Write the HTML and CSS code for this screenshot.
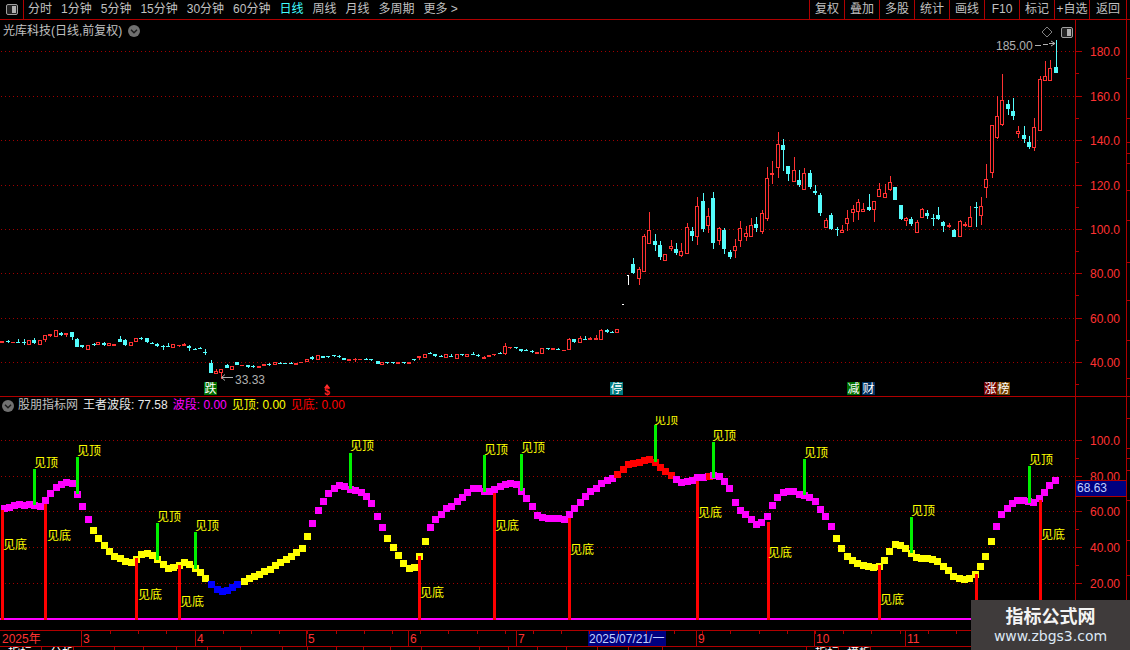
FILE: index.html
```html
<!DOCTYPE html>
<html lang="zh">
<head>
<meta charset="utf-8">
<title>光库科技 日线</title>
<link rel="stylesheet" href="styles.css">
</head>
<body>
<div class="app">
  <header class="toolbar">
    <div class="sidebox">
      <svg class="panel-icon" viewBox="0 0 12 11"><rect x="0.5" y="0.5" width="11" height="10" rx="1.5" class="pi-frame"/><rect x="6" y="2" width="4" height="7" class="pi-fill"/></svg>
    </div>
    <nav class="periods">
      <span>分时</span><span>1分钟</span><span>5分钟</span><span>15分钟</span><span>30分钟</span><span>60分钟</span><span class="active">日线</span><span>周线</span><span>月线</span><span>多周期</span><span>更多 &gt;</span>
    </nav>
    <nav class="actions">
      <span>复权</span><span>叠加</span><span>多股</span><span>统计</span><span>画线</span><span>F10</span><span>标记</span><span>+自选</span><span>返回</span>
    </nav>
  </header>

  <section class="panel price-panel">
    <svg id="price" class="plot price-plot" viewBox="0 20 1130 376"></svg>
    <div class="panel-title">
      <span>光库科技(日线,前复权)</span>
      <svg class="chev" viewBox="0 0 12 12"><circle cx="6" cy="6" r="6" class="chev-bg"/><path d="M3 4.8 6 7.8 9 4.8" class="chev-line"/></svg>
    </div>
    <div class="panel-tools">
      <svg class="diamond" viewBox="0 0 12 12"><path d="M6 1 11 6 6 11 1 6Z"/></svg>
      <svg class="panel-icon" viewBox="0 0 12 11"><rect x="0.5" y="0.5" width="11" height="10" rx="1.5" class="pi-frame"/><rect x="6" y="2" width="4" height="7" class="pi-fill"/></svg>
    </div>
  </section>

  <section class="panel osc-panel">
    <svg id="osc" class="plot osc-plot" viewBox="0 397 1130 233"></svg>
    <div class="osc-title">
      <svg class="chev" viewBox="0 0 12 12"><circle cx="6" cy="6" r="6" class="chev-bg"/><path d="M3 4.8 6 7.8 9 4.8" class="chev-line"/></svg>
      <span class="t-gray">股朋指标网</span>
      <span class="t-white">王者波段: 77.58</span>
      <span class="t-mag">波段: 0.00</span>
      <span class="t-yel">见顶: 0.00</span>
      <span class="t-red">见底: 0.00</span>
    </div>
    <div class="last-value">68.63</div>
  </section>

  <svg id="dates" class="dates" viewBox="0 630 1130 17"></svg>
  <div id="tabs" class="tabs"></div>

  <aside class="watermark">
    <div class="wm-cn">指标公式网</div>
    <div class="wm-url">www.zbgs3.com</div>
  </aside>
</div>
<script src="script.js"></script>
</body>
</html>
```

FILE: styles.css
```css
* { box-sizing: border-box; }
html, body { margin: 0; padding: 0; background: #000; }
body {
  font-family: "Liberation Sans", "Noto Sans CJK SC", sans-serif;
  font-size: 12px;
  color: #c0c0c0;
}
.app {
  position: relative;
  width: 1130px;
  height: 650px;
  overflow: hidden;
  display: flex;
  flex-direction: column;
  background: #000;
}

/* toolbar */
.toolbar {
  display: flex;
  height: 20px;
  border-bottom: 1px solid #b00000;
  flex: none;
}
.sidebox {
  width: 24px;
  border-right: 1px solid #b00000;
  display: flex;
  align-items: center;
  justify-content: center;
}
.panel-icon { width: 12px; height: 11px; display: block; }
.pi-frame { fill: #222; stroke: #a0a0a0; }
.pi-fill { fill: #b0b0b0; }
.periods {
  display: flex;
  gap: 9px;
  padding-left: 4px;
  line-height: 19px;
  white-space: nowrap;
}
.periods .active { color: #40ffff; }
.actions {
  display: flex;
  margin-left: auto;
  margin-right: 3px;
  line-height: 19px;
  border-right: 1px solid #b00000;
}
.actions span {
  width: 35px;
  text-align: center;
  border-left: 1px solid #b00000;
  white-space: nowrap;
}
.actions span:last-child { width: 37px; }

/* panels */
.panel { position: relative; flex: none; }
.plot { display: block; width: 1130px; }
.price-panel { height: 377px; border-bottom: 1px solid #b00000; }
.price-plot { height: 376px; }
.osc-panel { height: 233px; }
.osc-plot { height: 233px; }
.plot text { font-family: "Liberation Sans", "Noto Sans CJK SC", sans-serif; font-size: 12px; }

.panel-title {
  position: absolute;
  left: 3px;
  top: 3px;
  display: flex;
  align-items: center;
  gap: 6px;
  line-height: 16px;
  white-space: nowrap;
}
.panel-tools {
  position: absolute;
  left: 1041px;
  top: 6px;
  display: flex;
  align-items: center;
  gap: 8px;
}
.diamond { width: 12px; height: 12px; display: block; }
.diamond path { fill: none; stroke: #808080; }
.chev { width: 12px; height: 12px; display: block; flex: none; }
.chev-bg { fill: #707070; }
.chev-line { fill: none; stroke: #1a1a1a; stroke-width: 1.4; }

.osc-title {
  position: absolute;
  left: 2px;
  top: 0;
  display: flex;
  align-items: center;
  gap: 5px;
  line-height: 17px;
  white-space: nowrap;
}
.osc-title .t-gray { margin-left: -1px; }
.t-gray { color: #c0c0c0; }
.t-white { color: #e8e8e8; }
.t-mag { color: #ff00ff; }
.t-yel { color: #ffff00; }
.t-red { color: #ff0000; }

.last-value {
  position: absolute;
  left: 1076px;
  top: 83px;
  width: 50px;
  height: 17px;
  background: #000080;
  border-top: 1px solid #b00000;
  border-bottom: 1px solid #b00000;
  color: #c0d0ff;
  line-height: 15px;
  padding-left: 1px;
}

/* svg chart parts */
.grid { stroke: #a00000; stroke-width: 1; stroke-dasharray: 1 3; }
.axis { stroke: #b00000; stroke-width: 1; shape-rendering: crispEdges; }
.lbl { fill: #ff3232; text-anchor: end; }
.gray { fill: #b0b0b0; }
.arrow { fill: none; stroke: #b0b0b0; stroke-width: 1; }
.cand { shape-rendering: crispEdges; }
.r-w { stroke: #ff3232; }
.c-w { stroke: #54fcfc; }
.r-h { fill: #000; stroke: #ff3232; }
.r-f { fill: #ff3232; }
.c-f { fill: #54fcfc; }
.w-f { fill: #fff; }
.sq { shape-rendering: crispEdges; }
.sq-m { fill: #ff00ff; }
.sq-y { fill: #ffff00; }
.sq-b { fill: #0000ff; }
.sq-r { fill: #ff0000; }
.bar-g { fill: #00f000; shape-rendering: crispEdges; }
.bar-r { fill: #ff0000; shape-rendering: crispEdges; }
.base { fill: #ff00ff; shape-rendering: crispEdges; }
.sign { fill: #ffff00; }
.mark { fill: #fff; text-anchor: middle; }
.mk-green { fill: #006e00; }
.mk-teal { fill: #007a80; }
.mk-navy { fill: #003060; }
.mk-maroon { fill: #700000; }
.mk-brown { fill: #704000; }
.plot .dollar { fill: #ff2020; text-anchor: middle; font-weight: bold; font-size: 10px; }

/* date axis */
.dates { display: block; width: 1130px; height: 17px; flex: none; }
.dates text { font-family: "Liberation Sans", "Noto Sans CJK SC", sans-serif; font-size: 12px; fill: #ff3232; }
.dates .sel { fill: #000080; }
.dates .sel-t { fill: #c0d0ff; }

/* clipped tab strip */
.tabs {
  display: flex;
  height: 3px;
  overflow: hidden;
  flex: none;
  line-height: 12px;
}
.tab {
  flex: none;
  height: 3px;
  border-right: 1px solid #b00000;
  color: #fff;
  padding-left: 8px;
  white-space: nowrap;
}

/* watermark */
.watermark {
  position: absolute;
  left: 971px;
  top: 600px;
  width: 159px;
  height: 50px;
  background: #3f3b3b;
  text-align: center;
}
.wm-cn {
  font-family: "Noto Sans CJK SC", sans-serif;
  font-weight: 700;
  font-size: 18px;
  line-height: 22px;
  margin-top: 4px;
  color: #f4f4f4;
}
.wm-url {
  font-family: "DejaVu Sans", sans-serif;
  font-size: 14px;
  line-height: 20px;
  color: #dde8f4;
}
```

FILE: script.js
```js
var SEGMENTS = [
  { ox: 0, oy: 320, d: [[7,'f',64,68],[25,'c',63,65,60,69],[40,'f',66,70],[55,'c',65,69,57,70],[72,'c',66,70,58,75],[88,'h',60,74],[103,'c',60,68,55,72],[121,'h',60,74],[136,'h',46,60,46,66],[150,'f',43,47,42,50],[169,'h',30,50],[183,'c',40,44,36,48],[199,'f',40,45,40,52],[217,'c',37,50,37,60],[232,'c',57,80,54,80],[246,'c',76,82,76,84],[265,'h',76,90],[281,'c',71,74,68,78],[295,'h',66,74],[313,'c',69,75,66,78],[328,'h',69,77],[343,'f',71,77],[361,'c',58,66,48,66],[376,'c',60,75,56,78],[394,'h',67,77],[409,'h',54,66],[423,'c',54,56,50,60],[442,'c',55,65,55,70],[457,'c',68,70,66,72],[472,'c',71,77,69,80],[490,'c',77,80,75,90],[505,'c',77,79,70,82],[520,'h',72,83],[538,'f',75,79,75,82],[553,'f',73,77,70,77],[568,'c',78,84,76,92],[585,'c',86,88,85,90],[601,'c',83,85,82,88],[616,'c',96,98,88,105],[634,'c',130,158,120,158],[649,'h',153,161,148,161],[664,'h',148,158,148,178],[682,'c',135,144,132,145],[697,'h',138,150],[712,'c',126,135],[727,'f',134,136],[745,'c',136,141,136,145],[760,'c',137,139,135,145],[778,'f',138,143],[793,'f',132,137],[808,'c',132,134,130,137],[826,'h',126,134],[841,'c',128,130,126,131],[856,'c',129,131],[874,'c',128,130,127,132],[889,'f',129,134],[904,'f',126,128],[922,'h',118,126],[937,'c',112,116,108,120],[955,'h',105,120],[970,'c',108,113],[985,'c',109,111,109,114],[1003,'c',106,109,105,110],[1018,'c',107,112,105,113],[1033,'c',113,120],[1048,'f',118,122],[1066,'f',116,120,114,125],[1081,'f',117,119],[1099,'c',116,118,114,120],[1114,'c',118,120,117,122],[1133,'c',123,132],[1147,'h',126,134]] },
  { ox: 380, oy: 310, d: [[21,'c',156,159,156,162],[40,'c',156,159,156,162],[55,'f',156,162],[71,'c',156,159,156,162],[88,'f',156,162],[103,'c',147,150,147,153],[118,'f',138,144,138,150],[136,'h',133,143],[151,'c',129,132,126,132],[166,'c',133,138,133,141],[184,'c',137,139,135,141],[199,'h',133,143],[214,'c',138,141,133,141],[232,'h',133,147],[247,'c',132,135,132,138],[262,'h',133,141],[280,'c',133,136,126,136],[295,'c',135,138,132,142],[313,'f',141,147,138,147],[328,'f',135,141],[342,'f',132,135,132,138],[361,'c',129,132,126,132],[376,'h',108,132,99,135],[390,'f',111,114,111,116],[409,'c',111,114,111,117],[424,'c',117,123,117,126],[438,'c',120,123,117,123],[457,'c',123,126,120,129],[472,'f',126,132],[487,'h',114,132],[505,'c',114,117,114,120],[520,'f',114,120],[535,'c',117,120,114,120],[552,'f',120,123],[568,'h',87,120,84,120],[583,'c',87,96,87,99],[601,'h',84,99,78,99],[616,'c',87,90,78,90],[631,'f',84,90,81,90],[649,'f',84,90,75,90],[664,'h',60,90,57,90],[682,'c',60,66,57,69],[696,'c',66,69,63,69],[712,'h',57,69]] },
  { ox: 600, oy: 200, d: [[100,'c',192,220,174,222],[118,'h',207,237,201,255],[133,'h',108,216,102,216],[148,'h',90,132,36,132],[166,'c',123,135,102,153],[181,'c',135,171,123,180],[196,'h',162,183],[214,'h',138,147,120,153],[229,'c',147,159,129,165],[244,'h',153,168,129,171],[262,'h',81,162,69,162],[277,'c',93,108,81,123],[292,'h',18,111,-9,135]] },
  { ox: 700, oy: 120, d: [[10,'c',243,327,219,336],[25,'h',288,318,264,339],[40,'c',234,369,216,387],[58,'h',324,363,321,375],[73,'c',330,387,324,402],[91,'c',396,411,390,417],[106,'h',378,393,357,414],[121,'h',324,363,303,381],[139,'h',339,351,318,363],[154,'h',315,351,294,351],[169,'c',312,324,291,336],[187,'h',279,336,270,342],[202,'h',174,297,141,303],[217,'f',159,165,123,192],[235,'h',72,144,36,174],[250,'c',75,90,57,153],[265,'c',138,162,138,183],[283,'h',150,186,111,186],[298,'c',180,195,150,201],[313,'h',159,210,144,210],[331,'c',159,201,150,207],[346,'c',212,219,195,225],[361,'c',225,279,219,288],[379,'h',300,324,294,324],[394,'c',285,327,279,330],[412,'c',326,329,321,348],[427,'h',330,339,315,339],[442,'h',294,312,270,333],[460,'h',267,279,255,306],[475,'h',246,276,237,300],[490,'h',267,276,249,276],[508,'c',261,270,222,273],[523,'h',243,270,243,306],[538,'h',207,231,189,231],[556,'h',219,234,192,234],[571,'h',186,210,168,213],[586,'c',201,240],[604,'c',255,297,255,300],[619,'h',294,303,291,318],[634,'c',297,312,291,318],[652,'h',306,339,300,339],[667,'h',267,294,264,294],[682,'c',279,288,270,297],[700,'c',293,296,282,318],[715,'c',285,297,261,300],[730,'c',306,318,303,336],[748,'f',315,321,309,324],[763,'c',330,351,327,351],[781,'h',303,351,300,351],[796,'f',312,318,306,321],[811,'h',291,321,258,321],[829,'c',260,263,246,321],[844,'h',258,288,231,315],[859,'h',177,204,132,234]] },
  { ox: 950, oy: 30, d: [[127,'h',285,430,285,443],[142,'h',258,324,198,327],[157,'h',210,285,132,288],[175,'c',222,236,210,254],[190,'c',243,258,204,270],[205,'h',303,312,288,324],[223,'c',315,327,288,339],[238,'c',336,351,318,357],[253,'h',291,354,264,363],[271,'h',147,304,138,304],[286,'h',138,153,93,153],[301,'h',114,153,90,153],[319,'c',111,129,30,129]] }
];

var SQUARES = [
 ['m',[[4,508],[9,507],[14,505],[19,504],[24,505],[29,504],[34,505],[40,506],[45,500],[50,493],[56,487],[61,484],[66,482],[72,483],[77,494],[82,506],[88,519]]],
 ['y',[[93,530],[98,538],[104,545],[109,551],[114,556],[120,558],[125,561],[131,562],[136,559],[141,554],[147,553],[152,555],[157,559],[163,564],[168,568],[173,567],[179,565],[184,562],[189,564],[195,568],[200,572],[205,578]]],
 ['b',[[211,584],[217,589],[222,591],[227,590],[232,587],[237,584]]],
 ['y',[[244,581],[249,578],[254,576],[259,574],[264,571],[270,569],[275,565],[280,562],[286,559],[291,556],[296,552],[302,548],[307,536]]],
 ['m',[[312,523],[318,510],[323,501],[328,493],[334,488],[339,485],[344,486],[350,489],[355,490],[361,492],[366,496],[371,503],[377,516],[382,527]]],
 ['y',[[387,538],[393,547],[398,555],[403,563],[409,568],[414,567],[419,556],[425,541]]],
 ['m',[[430,527],[435,519],[441,514],[446,508],[451,506],[457,501],[462,497],[467,492],[473,488],[478,488],[484,491],[489,491],[494,489],[500,486],[505,484],[510,483],[516,484],[521,491],[526,498],[532,506],[537,515],[542,517],[548,518],[553,518],[558,518],[564,519],[569,514],[574,508],[580,502],[585,496],[590,491],[596,488],[601,483],[607,480],[612,478]]],
 ['r',[[617,474],[623,469],[628,464],[633,463],[639,462],[644,460],[649,459],[655,462],[660,467],[665,471],[671,475]]],
 ['m',[[676,479],[681,482],[687,481],[692,480],[697,477],[703,477],[708,476]]],
 ['r',[[709,476]]],
 ['m',[[713,475],[719,476],[724,481],[729,488],[735,502],[740,510],[745,514],[751,519],[756,524],[761,522],[767,516],[772,505],[777,497],[783,492],[788,491],[793,491],[799,494],[804,495],[809,497],[815,501],[820,509],[825,516],[831,526]]],
 ['y',[[836,538],[841,548],[847,556],[852,560],[857,563],[863,565],[868,566],[873,567],[879,566],[884,560],[889,551],[895,544],[900,545],[905,548],[911,553],[916,557],[921,558],[927,558],[932,559],[937,561],[943,566],[948,570],[953,576],[959,578],[964,579],[969,578],[975,574],[980,566],[985,556],[991,541]]],
 ['m',[[996,526],[1001,514],[1007,508],[1012,503],[1017,500],[1023,500],[1028,501],[1033,502],[1039,498],[1044,492],[1049,485],[1055,480]]]
];

var GREEN = [[33,469,505],[76,457,494],[156,523,560],[194,532,569],[349,453,489],[483,455,492],[520,454,491],[654,425,462],[712,442,478],[803,459,495],[910,517,553],[1028,466,503]];
var RED = [[1,510],[44,504],[135,558],[178,565],[418,556],[493,493],[568,518],[696,481],[767,522],[878,565],[975,574],[1039,500]];
var TOP_LABELS = [[34,462],[77,450],[157,516],[195,525],[350,445],[484,449],[521,447],[712,435],[804,452],[1029,459],[911,510]];
var BOT_LABELS = [[3,544],[47,535],[138,594],[180,601],[420,592],[495,525],[570,549],[698,512],[768,552],[880,599],[1041,534]];

function priceSvg() {
  var s = '';
  [[51.5,'180.0'],[96.5,'160.0'],[140.5,'140.0'],[185.5,'120.0'],[229.5,'100.0'],[273.5,'80.00'],[318.5,'60.00'],[362.5,'40.00']].forEach(function (g) {
    s += '<line class="grid" x1="1" x2="1076" y1="' + g[0] + '" y2="' + g[0] + '"/>';
    s += '<line class="axis" x1="1076" x2="1082" y1="' + g[0] + '" y2="' + g[0] + '"/>';
    s += '<line class="axis" x1="1076" x2="1079" y1="' + (g[0] + 22) + '" y2="' + (g[0] + 22) + '"/>';
    s += '<text class="lbl" x="1120" y="' + (g[0] + 4.5) + '">' + g[1] + '</text>';
  });
  s += '<line class="axis" x1="1075.5" x2="1075.5" y1="20" y2="396"/>';
  s += '<line class="axis" x1="1126.5" x2="1126.5" y1="20" y2="396"/>';
  [78,118,142,153,163,190,220,262,300,340,378].forEach(function (y) {
    s += '<line class="axis" x1="1127" x2="1130" y1="' + (y + .5) + '" y2="' + (y + .5) + '"/>';
  });
  s += '<g class="cand">';
  SEGMENTS.forEach(function (seg) {
    seg.d.forEach(function (c) {
      var x = Math.round(seg.ox + c[0] / 3);
      var t = Math.round(seg.oy + c[2] / 3), b = Math.round(seg.oy + c[3] / 3);
      var hi = c[4] === undefined ? c[2] : c[4], lo = c[5] === undefined ? c[3] : c[5];
      var h = Math.round(seg.oy + hi / 3), l = Math.round(seg.oy + lo / 3);
      var w = c[1] === 'c' ? 'c-w' : 'r-w';
      if (l > h) s += '<line class="' + w + '" x1="' + (x + .5) + '" x2="' + (x + .5) + '" y1="' + h + '" y2="' + l + '"/>';
      if (c[1] === 'h') s += '<rect class="r-h" x="' + (x - 1.5) + '" y="' + (t + .5) + '" width="3" height="' + Math.max(b - t - 1, 1) + '"/>';
      else s += '<rect class="' + (c[1] === 'c' ? 'c-f' : 'r-f') + '" x="' + (x - 2) + '" y="' + t + '" width="4" height="' + Math.max(b - t, 1) + '"/>';
    });
  });
  s += '<rect class="w-f" x="622" y="304" width="2" height="1"/><rect class="w-f" x="628" y="275" width="1" height="10"/><rect class="w-f" x="627" y="275" width="1" height="1"/>';
  s += '</g>';

  s += '<text class="gray" x="996" y="50">185.00</text>';
  s += '<path class="arrow" d="M1035 45.5H1041M1043 44.5H1048M1049 43.5H1055M1051 41 1055 43.5 1051 46"/>';
  s += '<text class="gray" x="235" y="384">33.33</text>';
  s += '<path class="arrow" d="M233 377.5H222M225 374.5 221.500 377.500 225 380.5"/>';

  s += mark(204, 'mk-green', '跌') + mark(610, 'mk-teal', '停') + mark(847, 'mk-green', '减') + mark(862, 'mk-navy', '财') + mark(984, 'mk-maroon', '涨') + mark(997, 'mk-brown', '榜');
  s += '<path class="r-f" d="M327 384 330 388H324Z"/><text class="dollar" x="327" y="395">$</text>';
  return s;
}
function mark(x, cls, t) {
  return '<rect class="' + cls + '" x="' + x + '" y="382" width="13" height="13"/><text class="mark" x="' + (x + 6.5) + '" y="393">' + t + '</text>';
}

function oscSvg() {
  var s = '<defs><clipPath id="topclip"><rect x="640" y="416" width="60" height="20"/></clipPath></defs>';
  [[440.5,'100.0'],[476.5,'80.00'],[511.5,'60.00'],[547.5,'40.00'],[583.5,'20.00']].forEach(function (g) {
    s += '<line class="grid" x1="1" x2="1076" y1="' + g[0] + '" y2="' + g[0] + '"/>';
    s += '<line class="axis" x1="1076" x2="1082" y1="' + g[0] + '" y2="' + g[0] + '"/>';
    s += '<line class="axis" x1="1076" x2="1079" y1="' + (g[0] + 18) + '" y2="' + (g[0] + 18) + '"/>';
    s += '<text class="lbl" x="1120" y="' + (g[0] + 4.5) + '">' + g[1] + '</text>';
  });
  s += '<line class="axis" x1="1075.5" x2="1075.5" y1="397" y2="630"/>';
  s += '<line class="axis" x1="1126.5" x2="1126.5" y1="397" y2="630"/>';
  [418,448,458,470,500,540,575].forEach(function (y) {
    s += '<line class="axis" x1="1127" x2="1130" y1="' + (y + .5) + '" y2="' + (y + .5) + '"/>';
  });
  s += '<rect class="base" x="0" y="618" width="1076" height="2"/>';
  SQUARES.forEach(function (run) {
    run[1].forEach(function (p) {
      s += '<rect class="sq sq-' + run[0] + '" x="' + (p[0] - 3) + '" y="' + (p[1] - 3) + '" width="7" height="7"/>';
    });
  });
  RED.forEach(function (b) {
    s += '<rect class="bar-r" x="' + b[0] + '" y="' + b[1] + '" width="3" height="' + (620 - b[1]) + '"/>';
  });
  GREEN.forEach(function (b) {
    s += '<rect class="bar-g" x="' + b[0] + '" y="' + b[1] + '" width="3" height="' + (b[2] - b[1]) + '"/>';
  });
  TOP_LABELS.forEach(function (l) {
    s += '<text class="sign" x="' + l[0] + '" y="' + (l[1] + 4.5) + '">见顶</text>';
  });
  s += '<text class="sign" clip-path="url(#topclip)" x="654" y="423.5">见顶</text>';
  BOT_LABELS.forEach(function (l) {
    s += '<text class="sign" x="' + l[0] + '" y="' + (l[1] + 4.5) + '">见底</text>';
  });
  return s;
}

function datesSvg() {
  var s = '<line class="axis" x1="0" x2="1130" y1="630.5" y2="630.5"/><line class="axis" x1="0" x2="1130" y1="646.5" y2="646.5"/>';
  s += '<rect class="sel" x="588" y="631" width="78" height="15"/>';
  [[81,'3'],[195,'4'],[306,'5'],[408,'6'],[516,'7'],[696,'9'],[814,'10'],[905,'11'],[1126,'']].forEach(function (d) {
    s += '<line class="axis" x1="' + (d[0] + .5) + '" x2="' + (d[0] + .5) + '" y1="631" y2="646"/>';
    s += '<text x="' + (d[0] + 2) + '" y="643">' + d[1] + '</text>';
  });
  for (var x = 110; x < 971; x += 28.2) {
    var tx = Math.round(x) + .5;
    s += '<line class="axis" x1="' + tx + '" x2="' + tx + '" y1="631" y2="634"/>';
  }
  s += '<line class="axis" x1="1076.5" x2="1076.5" y1="631" y2="646"/>';
  s += '<text x="2" y="643">2025年</text>';
  s += '<text class="sel-t" x="589" y="643">2025/07/21/一</text>';
  return s;
}

document.getElementById('price').innerHTML = priceSvg();
document.getElementById('osc').innerHTML = oscSvg();
document.getElementById('dates').innerHTML = datesSvg();

var tabs = document.getElementById('tabs');
[[42,'指标'],[32,'分析'],[41,''],[29,''],[33,''],[31,''],[33,''],[42,''],[25,''],[29,''],[27,''],[27,''],[31,''],[58,''],[29,''],[29,''],[29,''],[31,''],[31,''],[34,''],[144,''],[32,'指标'],[32,'模板']].forEach(function (t) {
  var el = document.createElement('div');
  el.className = 'tab';
  el.style.width = t[0] + 'px';
  el.textContent = t[1];
  tabs.appendChild(el);
});
```
